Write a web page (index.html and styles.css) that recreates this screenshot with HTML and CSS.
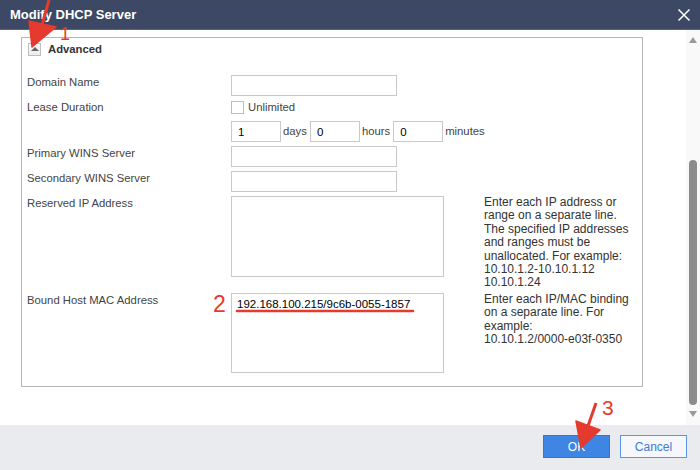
FILE: index.html
```html
<!DOCTYPE html>
<html lang="en">
  <head>
    <meta charset="UTF-8" />
    <meta name="viewport" content="width=device-width, initial-scale=1.0" />
    <title>Modify DHCP Server</title>
    <link rel="stylesheet" href="styles.css">
  </head>
  <body>
    <div class="dialog">
      <div class="titlebar">
        <span class="title">Modify DHCP Server</span>
        <svg class="close" width="14" height="14" viewBox="0 0 14 14">
          <path d="M1.5 1.5 L12.5 12.5 M12.5 1.5 L1.5 12.5" stroke="#fff" stroke-width="1.5" fill="none" />
        </svg>
      </div>

      <div class="main">
        <div class="content">
          <div class="panel">
            <div class="panel-head">
              <span class="toggle"><span class="caret"></span></span>
              <span class="panel-title">Advanced</span>
            </div>

            <div class="row">
              <label class="lbl">Domain Name</label>
              <input type="text" class="txt txt-wide" />
            </div>

            <div class="row row-lease">
              <label class="lbl">Lease Duration</label>
              <span class="check"></span>
              <span class="check-text">Unlimited</span>
            </div>

            <div class="row">
              <span class="lbl"></span>
              <input type="text" class="txt txt-num" value="1" />
              <span class="unit">days</span>
              <input type="text" class="txt txt-num" value="0" />
              <span class="unit">hours</span>
              <input type="text" class="txt txt-num" value="0" />
              <span class="unit">minutes</span>
            </div>

            <div class="row">
              <label class="lbl">Primary WINS Server</label>
              <input type="text" class="txt txt-wide" />
            </div>

            <div class="row">
              <label class="lbl">Secondary WINS Server</label>
              <input type="text" class="txt txt-wide" />
            </div>

            <div class="row row-reserved">
              <label class="lbl">Reserved IP Address</label>
              <textarea class="area area-reserved"></textarea>
              <p class="help">Enter each IP address or range on a separate line. The specified IP addresses and ranges must be unallocated. For example:<br />10.10.1.2-10.10.1.12<br />10.10.1.24</p>
            </div>

            <div class="row">
              <label class="lbl">Bound Host MAC Address</label>
              <textarea class="area area-bound">192.168.100.215/9c6b-0055-1857</textarea>
              <p class="help">Enter each IP/MAC binding on a separate line. For example:<br />10.10.1.2/0000-e03f-0350</p>
            </div>
          </div>
        </div>

        <div class="scrollbar">
          <span class="sb-up"></span>
          <span class="sb-thumb"></span>
          <span class="sb-down"></span>
        </div>
      </div>

      <div class="footer">
        <button class="btn btn-ok">OK</button>
        <button class="btn btn-cancel">Cancel</button>
      </div>

      <!-- annotation marks drawn over the dialog -->
      <svg class="marks" width="700" height="470" viewBox="0 0 700 470">
        <g fill="#e53a2e" stroke="#e53a2e">
          <line x1="49" y1="0" x2="42" y2="25" stroke-width="3" />
          <polygon points="29,21 56,27 32,47" stroke-width="1.5" stroke-linejoin="round" />
          <line x1="596" y1="403" x2="588" y2="426" stroke-width="3" />
          <polygon points="576,421 600,430 581,448" stroke-width="1.5" stroke-linejoin="round" />
          <line x1="237" y1="311" x2="413" y2="311" stroke-width="2.5" stroke-linecap="round" />
        </g>
        <g class="mark-num">
          <text x="60" y="40" font-size="18">1</text>
          <text x="213" y="312" font-size="23">2</text>
          <text x="602" y="415" font-size="21">3</text>
        </g>
      </svg>
    </div>
  </body>
</html>
```

FILE: styles.css
```css
* {
  margin: 0;
  padding: 0;
  box-sizing: border-box;
}

body {
  font-family: "Liberation Sans", Arial, sans-serif;
  font-size: 11.3px;
  color: #333;
  background: #fff;
}

.dialog {
  position: relative;
  width: 700px;
  height: 470px;
  display: flex;
  flex-direction: column;
  overflow: hidden;
}

/* Barra de título */
.titlebar {
  height: 30px;
  background: #3d4964;
  border-bottom: 1px solid #56647f;
  display: flex;
  align-items: center;
  justify-content: space-between;
  padding: 0 9px 0 10px;
}

.title {
  color: #fff;
  font-weight: bold;
  font-size: 13px;
}

.close {
  display: block;
}

.main {
  flex: 1;
  display: flex;
  background: #fff;
}

.content {
  flex: 1;
  padding: 7px 0 0 21px;
}

.panel {
  width: 622px;
  height: 350px;
  border: 1px solid #b5b5b5;
  padding: 4px 0 0 5px;
}

.panel-head {
  display: flex;
  align-items: center;
  gap: 7px;
  height: 14px;
  margin-left: 1px;
  margin-bottom: 19px;
}

.toggle {
  width: 13px;
  height: 13px;
  border: 1px solid #bdbdbd;
  background: linear-gradient(#fbfbfb, #ececec);
  display: flex;
  align-items: center;
  justify-content: center;
}

.caret {
  width: 0;
  height: 0;
  border-left: 4px solid transparent;
  border-right: 4px solid transparent;
  border-bottom: 4px solid #666;
}

.panel-title {
  font-weight: bold;
  color: #333;
}

/* Linhas do formulário */
.row {
  display: flex;
  align-items: flex-start;
  margin-bottom: 4px;
}

.row-lease {
  align-items: center;
  margin-bottom: 7px;
}

.row-reserved {
  margin-bottom: 3px;
}

.lbl {
  width: 204px;
  flex-shrink: 0;
  line-height: 14px;
  color: #444;
}

.txt {
  height: 21px;
  border: 1px solid #c9c9c9;
  padding: 0 6px;
  font-family: "Liberation Sans", Arial, sans-serif;
  font-size: 11.5px;
  color: #000;
  outline: none;
}

.txt-wide {
  width: 166px;
}

.txt-num {
  width: 50px;
}

.unit {
  line-height: 21px;
  margin: 0 3px 0 2px;
  color: #444;
}

.check {
  width: 13px;
  height: 13px;
  border: 1px solid #bdbdbd;
  background: #fff;
}

.check-text {
  margin-left: 4px;
  color: #444;
}

.area {
  width: 213px;
  border: 1px solid #c9c9c9;
  padding: 3px 5px;
  font-family: "Liberation Sans", Arial, sans-serif;
  font-size: 11.5px;
  line-height: 14px;
  color: #000;
  resize: none;
  outline: none;
  overflow: hidden;
}

.area-reserved {
  height: 81px;
}

.area-bound {
  height: 80px;
}

.help {
  width: 145px;
  margin-left: 40px;
  font-size: 12px;
  line-height: 13.4px;
  color: #333;
}

/* Barra de rolagem */
.scrollbar {
  width: 14px;
  background: #f9f9f9;
  display: flex;
  flex-direction: column;
  align-items: center;
  padding-top: 7px;
}

.sb-up {
  width: 0;
  height: 0;
  border-left: 4px solid transparent;
  border-right: 4px solid transparent;
  border-bottom: 6px solid #999;
}

.sb-thumb {
  width: 8px;
  height: 245px;
  margin-top: 117px;
  border-radius: 4px;
  background: #8c8c8c;
}

.sb-down {
  width: 0;
  height: 0;
  margin-top: 6px;
  border-left: 4px solid transparent;
  border-right: 4px solid transparent;
  border-top: 6px solid #999;
}

/* Rodapé */
.footer {
  height: 45px;
  background: #e9ebef;
  display: flex;
  justify-content: flex-end;
  align-items: flex-start;
  gap: 10px;
  padding: 10px 13px 0 0;
}

.btn {
  width: 67px;
  height: 23px;
  font-family: "Liberation Sans", Arial, sans-serif;
  font-size: 12px;
  cursor: pointer;
}

.btn-ok {
  background: #3f86e4;
  border: 1px solid #3576d4;
  color: #fff;
}

.btn-cancel {
  background: #f5f7fa;
  border: 1px solid #5b94e8;
  color: #3b7bdb;
}

.marks {
  position: absolute;
  left: 0;
  top: 0;
  pointer-events: none;
}

.mark-num {
  fill: #e53a2e;
  font-family: "Liberation Sans", Arial, sans-serif;
}
```
